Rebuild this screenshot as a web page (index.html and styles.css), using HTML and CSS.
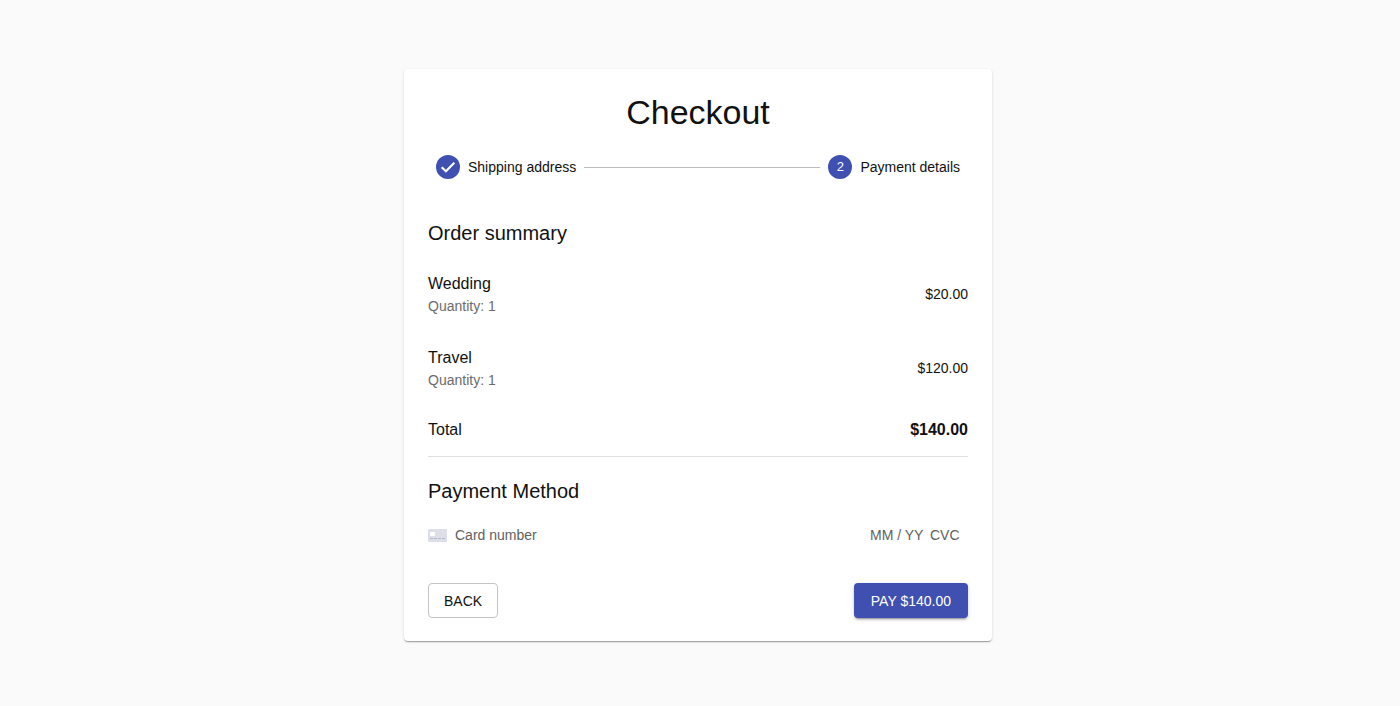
FILE: index.html
```html
<!DOCTYPE html>
<html lang="en">
<head>
<meta charset="utf-8">
<title>Checkout</title>
<meta name="viewport" content="width=device-width, initial-scale=1">
<link rel="stylesheet" href="styles.css">
</head>
<body>
<main class="card">
  <h1 class="title">Checkout</h1>
  <ol class="stepper">
    <li class="step">
      <svg class="step-icon" viewBox="0 0 24 24" aria-hidden="true"><circle cx="12" cy="12" r="12" fill="#4050b0"/><path d="M5.7 12.2 9.9 16.3 18.3 7.8" fill="none" stroke="#fff" stroke-width="2.1"/></svg>
      <span>Shipping address</span>
    </li>
    <li class="connector" aria-hidden="true"></li>
    <li class="step" aria-current="step">
      <span class="step-icon step-number">2</span>
      <span>Payment details</span>
    </li>
  </ol>

  <h2 class="heading">Order summary</h2>
  <ul class="items">
    <li class="item">
      <div><p class="name">Wedding</p><p class="quantity">Quantity: 1</p></div>
      <span class="price">$20.00</span>
    </li>
    <li class="item">
      <div><p class="name">Travel</p><p class="quantity">Quantity: 1</p></div>
      <span class="price">$120.00</span>
    </li>
    <li class="total">
      <span>Total</span>
      <strong>$140.00</strong>
    </li>
  </ul>
  <hr class="divider">

  <form class="payment">
    <h2 class="heading">Payment Method</h2>
    <div class="card-fields">
      <svg class="card-icon" viewBox="0 0 19 13" aria-hidden="true"><rect width="19" height="13" rx="1" fill="#dcdfe8"/><rect x="2" y="3" width="5" height="4" rx="1" fill="#fff"/><path d="M2 9.5h3M6 9.5h3M10 9.5h3M14 9.5h3" stroke="#b3bacb"/></svg>
      <input class="field number" type="text" aria-label="Card number" placeholder="Card number">
      <input class="field expiry" type="text" aria-label="Expiry date" placeholder="MM / YY">
      <input class="field cvc" type="text" aria-label="CVC" placeholder="CVC">
    </div>
    <div class="actions">
      <button class="button back" type="button">BACK</button>
      <button class="button pay" type="submit">PAY $140.00</button>
    </div>
  </form>
</main>
</body>
</html>
```
FILE: styles.css
```css
* {
  box-sizing: border-box;
}

body {
  margin: 0;
  padding: 69px 4px 24px 0;
  background: #fafafa;
  color: #111;
  font: 14px/20px "Liberation Sans", Arial, sans-serif;
}

h1, h2, p, ol, ul {
  margin: 0;
  padding: 0;
  font-weight: 400;
  list-style: none;
}

.card {
  max-width: 588px;
  margin: 0 auto;
  padding: 23px 24px;
  border-radius: 4px;
  background: #fff;
  box-shadow: 0 2px 1px -1px rgba(0, 0, 0, 0.2), 0 1px 1px rgba(0, 0, 0, 0.14), 0 1px 3px rgba(0, 0, 0, 0.12);
}

.title {
  font-size: 34px;
  line-height: 40px;
  text-align: center;
}

.stepper {
  display: flex;
  align-items: center;
  gap: 8px;
  padding: 23px 8px 38px;
}

.step {
  display: flex;
  align-items: center;
  gap: 8px;
}

.step-icon {
  flex: none;
  width: 24px;
  height: 24px;
}

.step-number {
  border-radius: 50%;
  background: #4050b0;
  color: #fff;
  font-size: 13px;
  line-height: 24px;
  text-align: center;
}

.connector {
  flex: 1;
  border-top: 1px solid #bdbdbd;
}

.heading {
  font-size: 20px;
  line-height: 32px;
}

.items {
  padding-top: 8px;
}

.item,
.total {
  display: flex;
  align-items: center;
  justify-content: space-between;
}

.item {
  padding: 15px 0;
}

.name {
  font-size: 16px;
  line-height: 24px;
}

.quantity {
  color: #6b6b6b;
}

.total {
  padding: 13px 0 14px;
  font-size: 16px;
  line-height: 24px;
}

.divider {
  margin: 0 0 18px;
  border: 0;
  border-top: 1px solid #e0e0e0;
}

.card-fields {
  display: flex;
  align-items: center;
  padding: 18px 8px 38px 0;
}

.card-icon {
  flex: none;
  width: 19px;
  height: 13px;
  margin-right: 8px;
}

.field {
  height: 20px;
  padding: 0;
  border: 0;
  outline: 0;
  background: transparent;
  color: inherit;
  font: inherit;
}

.field::placeholder {
  color: #616161;
  opacity: 1;
}

.number {
  flex: 1;
  min-width: 0;
}

.expiry {
  width: 60px;
}

.cvc {
  width: 30px;
}

.actions {
  display: flex;
  justify-content: space-between;
}

.button {
  height: 35px;
  border: 0;
  border-radius: 4px;
  font: inherit;
  cursor: pointer;
}

.back {
  padding: 0 15px;
  border: 1px solid #c4c4c4;
  background: #fff;
  color: #111;
}

.pay {
  padding: 0 17px;
  background: #4050b0;
  color: #fff;
  box-shadow: 0 3px 1px -2px rgba(0, 0, 0, 0.2), 0 2px 2px rgba(0, 0, 0, 0.14), 0 1px 5px rgba(0, 0, 0, 0.12);
}
```
